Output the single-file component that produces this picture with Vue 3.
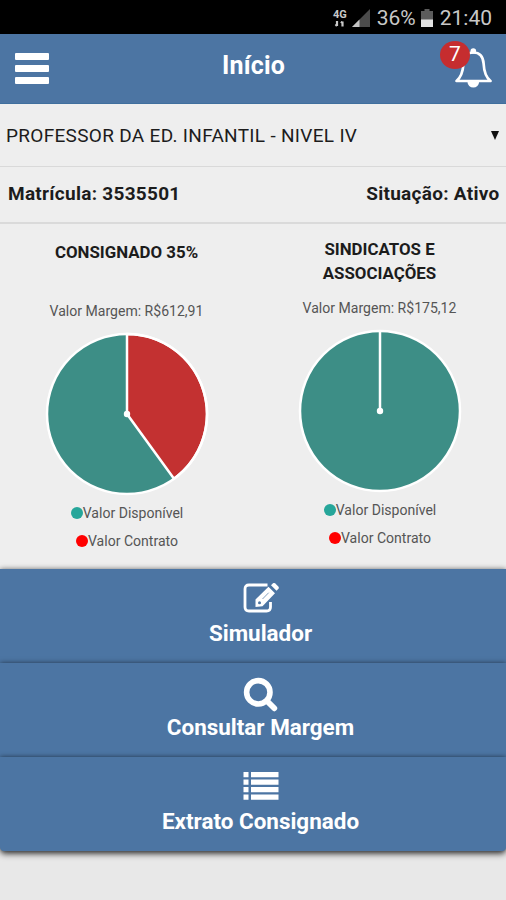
<script setup>
const charts = [
  { title: ['CONSIGNADO 35%'], margin: 'R$612,91', used: 0.4 },
  { title: ['SINDICATOS E', 'ASSOCIAÇÕES'], margin: 'R$175,12', used: 0 }
]

const radius = 80
const slice = (share) => {
  const a = share * Math.PI * 2
  return `M0 0V${-radius}A${radius} ${radius} 0 0 1 ${Math.sin(a) * radius} ${-Math.cos(a) * radius}Z`
}
</script>

<template>
  <div class="screen">
    <div class="status">
      <div class="network">
        <span>4G</span>
        <svg width="13" height="6" viewBox="0 0 13 6">
          <path d="M4 0v5M9.500 .5v5M2.600 3.200 4 5M8.100 2.300 9.500 .5" />
        </svg>
      </div>
      <svg class="signal" width="18" height="18" viewBox="0 0 18 18">
        <path d="M18 0v18H0z" fill="#4b4b4b" />
        <path d="M7.500 10.500v7.500H0z" fill="#c4c4c4" />
      </svg>
      <span class="percent">36%</span>
      <svg class="battery" width="12" height="18" viewBox="0 0 12 18">
        <path d="M3.500 0h5v2H12v9H0V2h3.500z" fill="#5c5c5c" />
        <path d="M0 10.500h12V18H0z" fill="#e2e2e2" />
      </svg>
      <span class="clock">21:40</span>
    </div>

    <header class="bar">
      <div class="menu"><i></i><i></i><i></i></div>
      <h1>Início</h1>
      <div class="alerts">
        <svg width="38" height="42" viewBox="0 0 38 42">
          <path d="M13.500 35a5.800 5.500 0 0 0 11.600 0z" fill="#fff" />
          <circle cx="19.300" cy="4" r="2.800" fill="#fff" />
          <path
            d="M2.500 34C7.500 30 9 24 9.500 16.500C10 8.500 13.500 5.500 19.300 5.500S29 8.500 29.600 16.500C30 24 31.500 30 36.500 34Z"
            fill="none" stroke="#fff" stroke-width="2.700" stroke-linejoin="round"
          />
        </svg>
        <span class="badge">7</span>
      </div>
    </header>

    <div class="select">
      <span>PROFESSOR DA ED. INFANTIL - NIVEL IV</span>
      <svg width="8" height="9" viewBox="0 0 8 9"><path d="M0 0h8L4 9z" fill="#111" /></svg>
    </div>
    <div class="info">
      <span class="reg">Matrícula: 3535501</span>
      <span class="sit">Situação: Ativo</span>
    </div>

    <section class="charts">
      <div v-for="c in charts" :key="c.margin" class="chart">
        <h2 :class="{ double: c.title.length > 1 }">
          <span v-for="line in c.title" :key="line">{{ line }}</span>
        </h2>
        <p class="margin">Valor Margem: {{ c.margin }}</p>
        <svg class="pie" width="164" height="164" viewBox="-82 -82 164 164">
          <circle :r="radius" fill="#3d8e86" />
          <path v-if="c.used" :d="slice(c.used)" fill="#c33131" />
          <path v-if="c.used" :d="slice(c.used)" class="edge" />
          <path v-else d="M0 0V-80" class="edge" />
          <circle :r="radius" class="edge" />
          <circle r="3.200" fill="#fff" />
        </svg>
        <p class="legend free"><i></i><span>Valor Disponível</span></p>
        <p class="legend used"><i></i><span>Valor Contrato</span></p>
      </div>
    </section>

    <nav class="actions">
      <a class="action">
        <svg width="36" height="30" viewBox="0 0 36 30">
          <path d="M24.500 2H6Q2 2 2 6v18q0 4 4 4h17.500q4 0 4-4v-5" fill="none" stroke="#fff" stroke-width="2.800" />
          <path d="M25.500 3.700 32 10.200 19.500 23.200 12.500 24v-7.500z" fill="#fff" />
          <path d="M28 2.200 30 .3q1.200-.8 2.300.2l3 3q1 1.100.2 2.300l-2 2z" fill="#fff" />
          <path d="m26.400 3 6.100 6.100" stroke="#4c75a3" stroke-width="1.100" />
          <path d="m19.500 16 6.200-6.300" stroke="#4c75a3" stroke-width=".7" />
          <circle cx="16.500" cy="19.800" r="1.500" fill="#4c75a3" />
        </svg>
        <span class="sim">Simulador</span>
      </a>
      <a class="action">
        <svg width="36" height="36" viewBox="0 0 36 36">
          <circle cx="15.300" cy="15.300" r="11.700" fill="none" stroke="#fff" stroke-width="5.600" />
          <path d="m24 24 7.300 7.300" stroke="#fff" stroke-width="5.800" stroke-linecap="round" />
        </svg>
        <span class="con">Consultar Margem</span>
      </a>
      <a class="action">
        <svg width="36" height="30" viewBox="0 0 36 30">
          <path
            d="M.5 1h5v5.300h-5zM8 1h27.500v5.300H8zM.5 8.500h5v5.300h-5zM8 8.500h27.500v5.300H8zM.5 16h5v5.300h-5zM8 16h27.500v5.300H8zM.5 23.500h5v5.300h-5zM8 23.500h27.500v5.300H8z"
            fill="#fff"
          />
        </svg>
        <span class="ext">Extrato Consignado</span>
      </a>
    </nav>
  </div>
</template>

<style>
body {
  margin: 0;
  background: #e8e8e8;
}
</style>

<style scoped>
.screen {
  width: 506px;
  height: 900px;
  overflow: hidden;
  background: #e8e8e8;
  font-family: Roboto, sans-serif;
  color: #1c1c1c;
}
h1, h2, p { margin: 0; }
span { white-space: nowrap; }

.status {
  height: 34px;
  box-sizing: border-box;
  padding: 1px 14px 0 0;
  display: flex;
  align-items: center;
  justify-content: flex-end;
  background: #000;
  color: #c8c8c8;
  font-size: 21px;
}
.network {
  display: flex;
  flex-direction: column;
  align-items: center;
  margin-right: 5px;
  font-size: 11px;
  font-weight: 700;
  line-height: 12px;
}
.network path { fill: none; stroke: #c8c8c8; stroke-width: 2.200; }
.signal { margin-right: 7px; }
.battery { margin: 0 7px 0 5px; }

.bar {
  height: 70px;
  box-sizing: border-box;
  padding: 0 12px 0 15px;
  display: grid;
  grid-template-columns: 46px 1fr 48px;
  background: #4c75a3;
  border-bottom: 1px solid #3f6f9d;
}
.menu {
  display: flex;
  flex-direction: column;
  gap: 5px;
  padding-top: 19px;
}
.menu i {
  width: 34px;
  height: 7px;
  border-radius: 1px;
  background: #fff;
}
h1 {
  padding-top: 17px;
  text-align: center;
  font-size: 25px;
  letter-spacing: .2px;
  line-height: 30px;
  color: #fff;
}
.alerts {
  position: relative;
  padding: 13px 0 0 8px;
}
.badge {
  position: absolute;
  left: -6px;
  top: 7px;
  width: 30px;
  height: 28px;
  border-radius: 50%;
  background: #c62d2f;
  color: #fff;
  font-size: 21px;
  line-height: 27px;
  text-align: center;
}

.select,
.info {
  box-sizing: border-box;
  display: flex;
  justify-content: space-between;
  align-items: center;
  background: #eee;
}
.select {
  height: 63px;
  padding: 0 7px 0 6px;
  border-bottom: 1px solid #d9d9d9;
  font-size: 19px;
  letter-spacing: .31px;
}
.info {
  height: 57px;
  padding: 0 6.500px 3px 8px;
  border-bottom: 2px solid #dadada;
  font-size: 19px;
  letter-spacing: .28px;
  font-weight: 700;
}

.charts {
  height: 345px;
  display: grid;
  grid-template-columns: 253px 253px;
  background: #eee;
}
.chart {
  display: flex;
  flex-direction: column;
  align-items: center;
}
h2 {
  height: 76px;
  box-sizing: border-box;
  padding-top: 16px;
  display: flex;
  flex-direction: column;
  align-items: center;
  font-size: 16.850px;
  line-height: 24px;
}
h2.double {
  height: 73px;
  padding-top: 13px;
}
.margin {
  height: 32px;
  line-height: 22px;
  font-size: 14.050px;
  color: #555;
}
.pie { display: block; }
.edge {
  fill: none;
  stroke: #fff;
  stroke-width: 2.500;
}
.legend {
  height: 28px;
  padding-left: 1px;
  display: flex;
  align-items: center;
  font-size: 14.050px;
  color: #555;
}
.legend.free { margin-top: 3px; }
.legend i {
  width: 12px;
  height: 12px;
  border-radius: 50%;
}
.free i { background: #26a69a; }
.used i { background: #f00; }

.actions {
  display: flex;
  flex-direction: column;
}
.action {
  height: 94px;
  box-sizing: border-box;
  padding: 14px 0 0 15px;
  display: flex;
  flex-direction: column;
  align-items: center;
  background: #4c75a3;
  box-shadow: 0 0 5px rgba(0, 0, 0, .55);
  color: #fff;
  font-size: 22.450px;
  font-weight: 700;
}
.action:last-child {
  border-radius: 0 0 4px 4px;
  box-shadow: 0 0 5px rgba(0, 0, 0, .5), 0 4px 6px -1px rgba(0, 0, 0, .65);
}
.action span {
  margin-top: auto;
  height: 44px;
  line-height: 28px;
}
</style>
